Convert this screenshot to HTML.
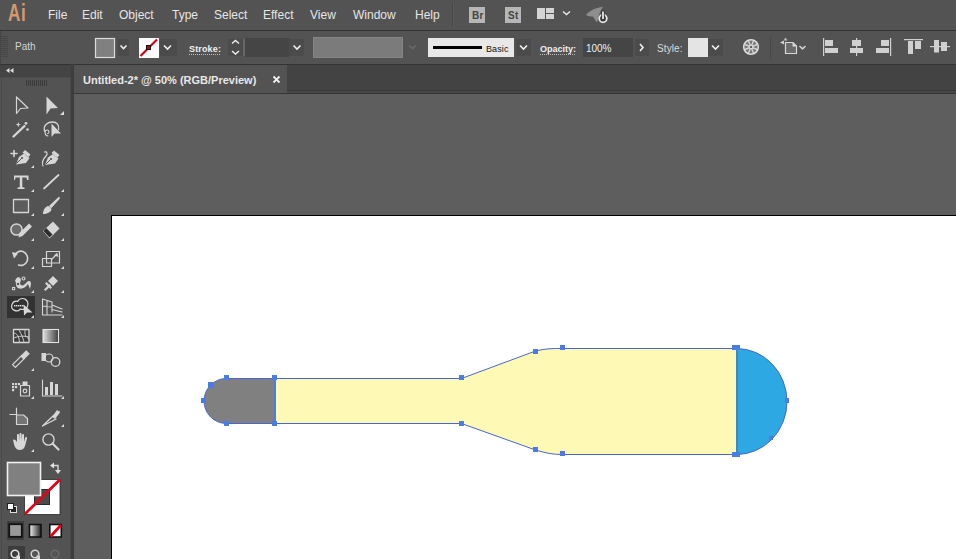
<!DOCTYPE html>
<html><head><meta charset="utf-8">
<style>
*{margin:0;padding:0;box-sizing:border-box}
html,body{width:956px;height:559px;overflow:hidden;background:#535353;font-family:"Liberation Sans",sans-serif}
.abs{position:absolute}
#menubar{left:0;top:0;width:956px;height:30px;background:#535353}
#menubar .m{position:absolute;top:8px;font-size:12px;color:#e6e6e6;line-height:14px;white-space:nowrap}
#line1{left:0;top:30px;width:956px;height:1px;background:#333}
#ctrl{left:0;top:31px;width:956px;height:33px;background:#535353}
#line2{left:0;top:64px;width:956px;height:1px;background:#333}
#tools{left:0;top:64px;width:72px;height:495px;background:#535353}
#toolhdr{left:0;top:64px;width:72px;height:14px;background:#434343}
#tabbar{left:72px;top:65px;width:884px;height:29px;background:#434343}
#tab{left:74px;top:65px;width:213px;height:28px;background:#535353}
#paste{left:74px;top:94px;width:882px;height:465px;background:#5e5e5e}
#artboard{left:111px;top:215px;width:845px;height:344px;background:#fff;border-left:1px solid #000;border-top:1px solid #000}
</style></head>
<body>
<div id="menubar" class="abs">
  <div class="abs" style="left:2px;top:2px;width:32px;height:26px;"></div>
  <div class="abs" style="left:8px;top:0px;font-size:23px;line-height:26px;color:#d39a70;transform:scaleX(0.74);transform-origin:0 0;letter-spacing:1px;font-weight:bold">Ai</div>
  <div class="m" style="left:48px">File</div>
  <div class="m" style="left:82px">Edit</div>
  <div class="m" style="left:119px">Object</div>
  <div class="m" style="left:172px">Type</div>
  <div class="m" style="left:214px">Select</div>
  <div class="m" style="left:263px">Effect</div>
  <div class="m" style="left:310px">View</div>
  <div class="m" style="left:353px">Window</div>
  <div class="m" style="left:415px">Help</div>
</div>
<!-- menubar icons -->
<svg class="abs" style="left:0;top:0" width="956" height="30" viewBox="0 0 956 30">
<rect x="452" y="3" width="1" height="23" fill="#474747"/><rect x="453" y="3" width="1" height="23" fill="#5c5c5c"/>
<rect x="469" y="7" width="16" height="16" fill="#b6b6b6"/>
<rect x="505" y="7" width="16" height="16" fill="#b6b6b6"/>
<g fill="#d4d4d4">
<rect x="537" y="8" width="8" height="11"/>
<rect x="546" y="8" width="8" height="5"/>
<rect x="546" y="14" width="8" height="5"/>
</g>
<path d="M563,11.5 L566.5,14.5 L570,11.5" fill="none" stroke="#e8e8e8" stroke-width="1.5"/>
<path d="M586,15 C589,11 595,8 603,6.5 C601.5,9 600.5,11 599.5,13.5 L597,22.5 C595.5,20.5 594,18.5 593,16.5 C591,16.5 588,16 586,15 Z" fill="#8e8e8e"/>
<circle cx="603" cy="18.5" r="3.8" fill="#3a3a3a" stroke="#e6e6e6" stroke-width="1.8"/>
<rect x="601.2" y="10.5" width="3.6" height="9" fill="#3a3a3a"/>
<rect x="602.1" y="11.5" width="1.8" height="7.5" fill="#e6e6e6"/>
</svg>
<div class="abs" style="left:472px;top:10px;font-size:10px;color:#444;letter-spacing:0.3px;font-weight:bold">Br</div>
<div class="abs" style="left:508px;top:10px;font-size:10px;color:#444;letter-spacing:0.3px;font-weight:bold">St</div>
<div id="line1" class="abs"></div>
<div id="ctrl" class="abs"></div>
<div id="ctrlitems">
<svg class="abs" style="left:0;top:31px" width="956" height="33" viewBox="0 31 956 33">
<!-- gripper -->
<g fill="#464646"><rect x="0" y="36" width="8" height="1"/><rect x="0" y="38" width="8" height="1"/><rect x="0" y="40" width="8" height="1"/><rect x="0" y="42" width="8" height="1"/><rect x="0" y="44" width="8" height="1"/><rect x="0" y="46" width="8" height="1"/><rect x="0" y="48" width="8" height="1"/><rect x="0" y="50" width="8" height="1"/><rect x="0" y="52" width="8" height="1"/><rect x="0" y="54" width="8" height="1"/><rect x="0" y="56" width="8" height="1"/><rect x="0" y="31" width="1" height="33"/></g>
<!-- fill swatch -->
<rect x="95.5" y="38.5" width="19" height="19" fill="#808080" stroke="#dcdcdc" stroke-width="1.2"/>
<rect x="118" y="39" width="11" height="17" fill="#4b4b4b"/>
<path d="M120.5,45.5 L123.5,48.5 L126.5,45.5" fill="none" stroke="#f0f0f0" stroke-width="1.6"/>
<!-- stroke swatch -->
<rect x="139" y="38" width="20" height="20" fill="#fafafa"/>
<path d="M140.5,56 L157,39.5" stroke="#d0001a" stroke-width="2.2"/>
<rect x="146.5" y="45.5" width="4" height="4" fill="#c00010" stroke="#111" stroke-width="1"/>
<rect x="160" y="39" width="17" height="17" fill="#4b4b4b"/>
<path d="M164,45.5 L167.5,49 L171,45.5" fill="none" stroke="#f0f0f0" stroke-width="1.6"/>
<!-- stroke label underline -->
<path d="M189,54.5 L221,54.5" stroke="#bdbdbd" stroke-width="1" stroke-dasharray="1 1"/>
<!-- spinner -->
<rect x="228" y="39" width="15" height="17" fill="#4b4b4b"/>
<path d="M232,43.5 L235.5,40.5 L239,43.5" fill="none" stroke="#f0f0f0" stroke-width="1.4"/>
<path d="M232,51 L235.5,54 L239,51" fill="none" stroke="#f0f0f0" stroke-width="1.4"/>
<rect x="243.5" y="39" width="1" height="17" fill="#7a7a7a"/>
<rect x="245" y="38" width="44" height="19" fill="#454545"/>
<rect x="289" y="39" width="15" height="17" fill="#4b4b4b"/>
<path d="M293.5,45.5 L297,49 L300.5,45.5" fill="none" stroke="#f0f0f0" stroke-width="1.6"/>
<!-- profile -->
<rect x="313" y="37" width="90" height="21" fill="#7b7b7b"/>
<rect x="313.5" y="37.5" width="89" height="20" fill="none" stroke="#858585" stroke-width="1"/>
<path d="M409,45.5 L412.5,48.5 L416,45.5" fill="none" stroke="#6c6c6c" stroke-width="1.4"/>
<!-- brush -->
<rect x="428" y="38" width="86" height="19" fill="#e8e8e8"/>
<rect x="433" y="46" width="49" height="3" fill="#000"/>
<rect x="516" y="39" width="15" height="17" fill="#4b4b4b"/>
<path d="M520,45.5 L523.5,49 L527,45.5" fill="none" stroke="#f0f0f0" stroke-width="1.6"/>
<!-- opacity -->
<path d="M540,54.5 L576,54.5" stroke="#bdbdbd" stroke-width="1" stroke-dasharray="1 1"/>
<rect x="583" y="38" width="50" height="19" fill="#454545"/>
<rect x="635" y="39" width="14" height="17" fill="#4b4b4b"/>
<path d="M640,44 L643,47.5 L640,51" fill="none" stroke="#f0f0f0" stroke-width="1.6"/>
<!-- style -->
<rect x="688" y="38" width="20" height="19" fill="#e4e4e4"/>
<rect x="708" y="39" width="15" height="17" fill="#4b4b4b"/>
<path d="M712,45.5 L715.5,49 L719,45.5" fill="none" stroke="#f0f0f0" stroke-width="1.6"/>
</svg>
<div class="abs" style="left:15px;top:41px;font-size:10px;color:#d4d4d4">Path</div>
<div class="abs" style="left:189px;top:44px;font-size:9px;color:#f0f0f0;font-weight:bold;letter-spacing:0.15px">Stroke:</div>
<div class="abs" style="left:486px;top:44px;font-size:9px;color:#111;letter-spacing:0.1px">Basic</div>
<div class="abs" style="left:540px;top:44px;font-size:9px;color:#f0f0f0;font-weight:bold">Opacity:</div>
<div class="abs" style="left:586px;top:43px;font-size:10px;color:#f0f0f0;letter-spacing:-0.1px">100%</div>
<div class="abs" style="left:657px;top:43px;font-size:10px;color:#dcdcdc;letter-spacing:0.1px">Style:</div>
</div>
<!-- control right icons -->
<svg class="abs" style="left:730px;top:31px" width="226" height="33" viewBox="730 31 226 33">
<circle cx="751" cy="47" r="7.3" fill="#777" stroke="#dcdcdc" stroke-width="1.6"/>
<path d="M751,47 L757.01,49.49 M751,47 L753.49,53.01 M751,47 L748.51,53.01 M751,47 L744.99,49.49 M751,47 L744.99,44.51 M751,47 L748.51,40.99 M751,47 L753.49,40.99 M751,47 L757.01,44.51" stroke="#d4d4d4" stroke-width="1.4"/>
<circle cx="751" cy="47" r="2.2" fill="#d4d4d4"/><circle cx="751" cy="47" r="1.1" fill="#444"/>
<rect x="770" y="37" width="1" height="22" fill="#484848"/>
<path d="M785.5,42.5 L793,42.5 L796.5,46 L796.5,53.5 L785.5,53.5 Z" fill="#6a6a6a" stroke="#d8d8d8" stroke-width="1.2"/>
<path d="M792.5,42.5 L796.5,46.5 L792.5,46.5 Z" fill="#d8d8d8"/>
<path d="M785.5,37.5 L783.5,40.5 L787.5,40.5 Z" fill="#bdbdbd"/>
<path d="M780,42.5 L784,40.5 L784,44.5 Z" fill="#cfcfcf"/>
<path d="M799.5,46 L802.5,48.8 L805.5,46" fill="none" stroke="#d0d0d0" stroke-width="1.6"/>
<g fill="#d0d0d0">
<rect x="823" y="38" width="1.2" height="18"/>
<rect x="825" y="40" width="8" height="6"/><rect x="825" y="48" width="13" height="5"/>
<rect x="856" y="38" width="1.2" height="18"/>
<rect x="852" y="40" width="9" height="6"/><rect x="850" y="48" width="13" height="5"/>
<rect x="890" y="38" width="1.2" height="18"/>
<rect x="881" y="40" width="8" height="6"/><rect x="876" y="48" width="13" height="5"/>
<rect x="904" y="39" width="19" height="1.2"/>
<rect x="908" y="41" width="5" height="13"/><rect x="915" y="41" width="6" height="8"/>
<rect x="930" y="46" width="20" height="1.2"/>
<rect x="934" y="40" width="5" height="12.5"/><rect x="941" y="42" width="6" height="9"/>
</g>
</svg>
<div id="line2" class="abs"></div>
<div id="tools" class="abs"></div>
<svg class="abs" style="left:0;top:64px" width="72" height="495" viewBox="0 64 72 495">
<rect x="0" y="64" width="72" height="14" fill="#444"/><rect x="0" y="64" width="72" height="1" fill="#333"/>
<rect x="0" y="77" width="72" height="1" fill="#4c4c4c"/>
<path d="M9.5,68 L6,70.5 L9.5,73 Z M13.5,68 L10,70.5 L13.5,73 Z" fill="#e0e0e0"/>
<rect x="1" y="78" width="1" height="481" fill="#4a4a4a"/>
<rect x="70" y="78" width="1" height="481" fill="#4a4a4a"/>
<rect x="71" y="64" width="1" height="495" fill="#3a3a3a"/>
<g fill="#3a3a3a">
<rect x="26" y="80" width="1" height="6"/><rect x="28" y="80" width="1" height="6"/><rect x="30" y="80" width="1" height="6"/><rect x="32" y="80" width="1" height="6"/><rect x="34" y="80" width="1" height="6"/><rect x="36" y="80" width="1" height="6"/><rect x="38" y="80" width="1" height="6"/><rect x="40" y="80" width="1" height="6"/><rect x="42" y="80" width="1" height="6"/><rect x="44" y="80" width="1" height="6"/><rect x="46" y="80" width="1" height="6"/>
</g>
<!-- selected tool bg -->
<rect x="7" y="296" width="28" height="22" fill="#323232"/>
<g fill="none" stroke="#d6d6d6" stroke-width="1.2" stroke-linejoin="round" stroke-linecap="round">
<!-- selection -->
<path d="M16.5,97 L16.5,113.5 L20.5,108.5 L28,108 Z"/>
<!-- magic wand -->
<path d="M13.5,136.5 L24.5,126" stroke-width="2.4"/>
<!-- lasso loop -->
<path d="M44.5,131 C43,125 48,122 52.5,122 C57,122 59.5,125 58.5,129.5" stroke-width="1.3"/>
<path d="M48,136 C44.5,135.5 44,130 47,130 C49.5,130 49.5,133.5 47.5,133.5" stroke-width="1.1"/>
<!-- add pen plus -->
<path d="M11,153.5 L17,153.5 M14,150.5 L14,156.5" stroke-width="1.6"/>
<!-- curvature pen curve -->
<path d="M43,166 C41,161 44,158 46,156 C48,154 47,151 44.5,152"/>
<!-- line -->
<path d="M44,188.5 L58.5,175" stroke-width="1.8"/>
<!-- rect -->
<rect x="13.5" y="199.5" width="15" height="13" fill="#5c5c5c" stroke-width="1.3"/>
<!-- shaper circle -->
<circle cx="16.5" cy="229.5" r="5.6" fill="#6c6c6c" stroke-width="1.5"/>
<!-- rotate -->
<path d="M14.5,256 C16,251.5 20,250.5 23,251.5 C27,253 28.5,258 27,261.5 C25.5,265 21.5,266 18.5,265" stroke-width="1.6"/>
<!-- scale -->
<rect x="46.5" y="251.5" width="13" height="11.5" stroke-width="1.2"/>
<rect x="42.5" y="258.5" width="9" height="8" stroke-width="1.2"/>
<path d="M52,259 L57,254" stroke-width="1.3"/>
<!-- perspective grid -->
<path d="M42.5,299 L42.5,315 L62,315 M42.5,299 L52,302 L52,312 M47,300.5 L47,314 M42.5,306 L52,307 M52,305 L62,309 M52,309.5 L62,312" stroke-width="1.1"/>
<!-- mesh -->
<rect x="13.5" y="329.5" width="15.5" height="13" fill="#3c3c3c" stroke-width="1.3"/>
<path d="M13.5,333 C17,333 19,336 19.5,342.5 M13.5,338 C17,337 21,335 29,337 M19,329.5 C20,333 23,336 24,342.5 M25,329.5 C25,333 24,336 29,339" stroke="#cfcfcf" stroke-width="1"/>
<!-- eyedropper -->
<path d="M15.4,367.4 L12.6,364.6 L21.6,355.6 L24.4,358.4 Z" stroke-width="1.3"/>
<!-- blend circles -->
<circle cx="49" cy="358" r="4" stroke-width="1.2"/>
<circle cx="55.5" cy="362" r="4.3" stroke-width="1.3"/>
<!-- symbol sprayer canister -->
<rect x="20.5" y="385.5" width="9" height="10.5" stroke-width="1.2"/>
<circle cx="25" cy="391" r="1.8" stroke-width="1.2"/>
<!-- graph -->
<path d="M42.5,380 L42.5,396 L62,396" stroke-width="1.1"/>
<!-- artboard -->
<path d="M16.5,415 L16.5,424.5 L27.5,424.5 L27.5,418.5 L23.5,415 Z" fill="#747474" stroke-width="1.2"/>
<path d="M16.5,408 L16.5,415 M10,414.5 L16.5,414.5" stroke-width="1.2"/>
<!-- slice knife -->
<path d="M42.5,426 L53,416 L59,411.5 M42.5,426 L56,419" stroke-width="1.3"/>
<!-- zoom -->
<circle cx="48.5" cy="439.5" r="5.6" stroke-width="1.4"/>
<path d="M52.5,443.5 L58.5,449.5" stroke-width="2.2"/>
</g>
<g fill="#d6d6d6">
<!-- direct selection -->
<path d="M46.5,96.5 L46.5,114.5 L50.5,108.5 L58,108 Z"/>
<!-- wand sparkles -->
<path d="M18.3,122 L19,124 L21,124.6 L19,125.3 L18.3,127.3 L17.6,125.3 L15.6,124.6 L17.6,124 Z"/>
<circle cx="26" cy="123.3" r="1.4"/><circle cx="27.5" cy="129.5" r="1.3"/>
<!-- lasso arrow -->
<path d="M51.5,123.5 L51.5,137 L54.5,133.5 L61,133.5 Z"/>
<!-- pen nib add -->
<path d="M16,164.5 L19,157 L24,153.5 L29.5,158 L26,163 Z"/>
<path d="M22.5,152.5 L25,150 L30.5,154.5 L28.5,157 Z"/>
<!-- curvature nib -->
<path d="M45,165 L48,157.5 L53,154 L58.5,158.5 L55,163.5 Z"/>
<path d="M51.5,153 L54,150.5 L59.5,155 L57.5,157.5 Z"/>
<!-- T -->
<path d="M14,175.5 L28.5,175.5 L28.5,180 L27,180 L26.5,177.5 L22.3,177.5 L22.3,187.2 L24.5,187.5 L24.5,189 L17.5,189 L17.5,187.5 L19.8,187.2 L19.8,177.5 L15.5,177.5 L15,180 L14,180 Z"/>
<!-- paintbrush -->
<path d="M49,206 L58,197.5 C59.5,196.5 60.5,197.5 59.5,199 L51,208.5 Z"/>
<path d="M43,214 C43,210 45,206.5 48.5,206 L51.5,209 C51,212.5 47,214 43,214 Z"/>
<!-- shaper pencil -->
<path d="M18.5,237.5 L19.5,233 L29,223.5 L32,226.5 L22.5,236 Z"/>
<!-- eraser -->
<path d="M43,231 L53,221.5 L59.5,228.5 L49.5,238.5 Z"/>
<path d="M46.2,228 L43.5,231 L49.5,237.5 L52.5,234.5 Z" fill="#2e2e2e"/>
<!-- rotate arrow head -->
<path d="M12,252 L18,253.5 L14,258.5 Z"/>
<path d="M57,253 L58.5,257 L54,255.5 Z"/>
<!-- warp -->
<path d="M15,281 C16,277 19,276 20.5,278.5 C22,281 18.5,283 21,285 C23,286.5 25,284 27,282 C29,280 31,281 31,284 L30,289 L28,284 C26,287 22,290 18,288 C15,286.5 17,283 15,281 Z"/>
<circle cx="23.5" cy="278.5" r="2"/>
<rect x="12" y="287" width="3.2" height="3.2"/>
<!-- puppet pin -->
<path d="M44,289.5 L49.5,284 L51,285.5 L45.5,291 Z"/>
<path d="M48,281 L53,276 L58,281 L53,286 Z"/>
<path d="M46.5,282 L52,287.5 L50.5,289 L45,283.5 Z"/>
<!-- shape builder arrow -->
<path d="M23.5,304.5 L24,315.5 L27.2,312.5 L32.5,312.5 Z"/>
<!-- blend rect -->
<rect x="41.5" y="353" width="4.5" height="8"/>
<!-- eyedropper head -->
<path d="M23.8,359.8 L20.2,356.2 L26.2,350.2 L29.8,353.8 Z"/>
<!-- symbol sprayer dots -->
<rect x="12" y="383" width="2.2" height="2.2"/><rect x="15" y="383" width="2.2" height="2.2"/><rect x="18" y="383" width="2.2" height="2.2"/>
<rect x="12" y="386" width="2.2" height="2.2"/><rect x="15" y="386" width="2.2" height="2.2"/><rect x="12" y="389" width="2.2" height="2.2"/>
<rect x="22.5" y="381.5" width="5" height="3.5"/>
<!-- graph bars -->
<rect x="45" y="387" width="3" height="8"/><rect x="50" y="382" width="3" height="13"/><rect x="55" y="384" width="3" height="11"/>
<!-- slice head -->
<path d="M52,417 L57,410 L60,412.5 L55,419 Z"/>
<!-- hand -->
<path d="M13,440 C14,439 16,440 17,442 L17,435 C17,433.5 19,433.5 19,435 L19,441 L19.5,434 C19.5,432.5 21.5,432.5 21.5,434 L21.5,441 L22,435 C22,433.5 24,433.5 24,435 L24,442 L25,438 C25.5,436.5 27.5,437 27,438.5 L25,446 C24,449 22,450 19.5,450 C17,450 15.5,448 14.5,446 Z"/>
</g>
<circle cx="18" cy="284" r="1.7" fill="#555" stroke="#d6d6d6" stroke-width="0.9"/><circle cx="23.5" cy="278.5" r="0.9" fill="#555"/><rect x="13" y="288" width="1.2" height="1.2" fill="#555"/>
<path d="M16.5,163.5 L21.5,158.5 M45.5,164.5 L50.5,159.5" stroke="#555" stroke-width="1"/><circle cx="22" cy="158" r="1.1" fill="#555"/><circle cx="51" cy="159" r="1.1" fill="#555"/>
<!-- shape builder cloud -->
<path d="M20.24,309.01 A4.8,4.8 0 1 1 17.68,301.35 A5.5,5.5 0 1 1 20.24,309.01 Z" fill="none" stroke="#dadada" stroke-width="1.2"/>
<g fill="#e8e8e8"><rect x="14" y="305" width="1.4" height="1.4"/><rect x="16" y="305" width="1.4" height="1.4"/><rect x="18" y="305" width="1.4" height="1.4"/><rect x="20" y="305" width="1.4" height="1.4"/><rect x="22" y="305" width="1.4" height="1.4"/></g>
<!-- gradient -->
<defs><linearGradient id="gr" x1="0" x2="1" y1="0" y2="0"><stop offset="0" stop-color="#e0e0e0"/><stop offset="1" stop-color="#3e3e3e"/></linearGradient></defs>
<rect x="43" y="329.5" width="15.5" height="13" fill="url(#gr)" stroke="#e0e0e0" stroke-width="1.1"/>
<!-- corner triangles -->
<g fill="#dcdcdc">
<path d="M64,111 L64,115 L60,115 Z"/>
<path d="M34,165 L34,168 L31,168 Z"/>
<path d="M64,189 L64,192 L61,192 Z"/>
<path d="M34,189 L34,192 L31,192 Z"/>
<path d="M34,213 L34,216 L31,216 Z"/>
<path d="M64,213 L64,216 L61,216 Z"/>
<path d="M34,238 L34,241 L31,241 Z"/>
<path d="M64,238 L64,241 L61,241 Z"/>
<path d="M34,266 L34,269 L31,269 Z"/>
<path d="M64,266 L64,269 L61,269 Z"/>
<path d="M64,290 L64,293 L61,293 Z"/>
<path d="M34,290 L34,293 L31,293 Z"/>
<path d="M34,315 L34,318 L31,318 Z"/>
<path d="M64,315 L64,318 L61,318 Z"/>
<path d="M34,368 L34,371 L31,371 Z"/>
<path d="M34,396 L34,399 L31,399 Z"/>
<path d="M64,396 L64,399 L61,399 Z"/>
<path d="M64,424 L64,427 L61,427 Z"/>
<path d="M34,449 L34,452 L31,452 Z"/>
</g>
<!-- fill / stroke -->
<rect x="24.5" y="479.5" width="35.5" height="35" fill="#fff" stroke="#2a2a2a" stroke-width="0.8"/>
<rect x="34.5" y="489.5" width="15" height="15" fill="#4a4a4a" stroke="#2a2a2a" stroke-width="1"/>
<path d="M25,514 L60,479.5" stroke="#e3001b" stroke-width="2.8"/>
<rect x="7.5" y="462.5" width="33" height="33" fill="#808080" stroke="#f0f0f0" stroke-width="1.6"/>
<!-- swap -->
<path d="M52,465.5 L58,465.5 L58,470.5" fill="none" stroke="#d8d8d8" stroke-width="1.4"/>
<path d="M50,465.5 L54,462.5 L54,468.5 Z M58,474 L55,470 L61,470 Z" fill="#e0e0e0"/>
<!-- default -->
<rect x="10.5" y="506.5" width="6" height="6" fill="#222" stroke="#ddd" stroke-width="1"/>
<rect x="7.5" y="503.5" width="6" height="6" fill="#fff" stroke="#222" stroke-width="1"/>
<!-- modes -->
<rect x="7" y="521" width="17" height="19" fill="#3e3e3e"/>
<rect x="9.2" y="524.2" width="12.6" height="12.6" fill="#999" stroke="#111" stroke-width="1.8"/>
<defs><linearGradient id="gr2" x1="0" x2="1"><stop offset="0" stop-color="#f4f4f4"/><stop offset="1" stop-color="#222"/></linearGradient></defs>
<rect x="29.5" y="524.5" width="11.5" height="12.5" fill="url(#gr2)" stroke="#111" stroke-width="1.6"/>
<rect x="49.8" y="524.5" width="11.5" height="12.5" fill="#fff" stroke="#111" stroke-width="1.6"/>
<path d="M50.5,536.5 L61,525" stroke="#e8001b" stroke-width="2.8"/>
<!-- bottom row -->
<rect x="8" y="546" width="17" height="13" fill="#3c3c3c"/>
<circle cx="15" cy="554" r="3.8" fill="none" stroke="#e0e0e0" stroke-width="1.6"/>
<rect x="16.5" y="555.5" width="3.5" height="3.5" fill="#e0e0e0"/>
<circle cx="35" cy="554" r="3.8" fill="none" stroke="#d0d0d0" stroke-width="1.6"/>
<rect x="36.5" y="555.5" width="3.5" height="3.5" fill="#d0d0d0"/>
<circle cx="55" cy="554" r="3.8" fill="none" stroke="#6a6a6a" stroke-width="1.4"/>
</svg>
<div id="tabbar" class="abs"></div>
<div id="tab" class="abs"></div>
<div class="abs" style="left:83px;top:74px;font-size:11px;font-weight:bold;color:#e8e8e8;white-space:nowrap">Untitled-2* @ 50% (RGB/Preview)</div>
<svg class="abs" style="left:272px;top:75px" width="10" height="10" viewBox="0 0 10 10"><path d="M1.5,1.5 L7.5,7.5 M7.5,1.5 L1.5,7.5" stroke="#f0f0f0" stroke-width="1.8"/></svg>
<div class="abs" style="left:287px;top:90px;width:669px;height:3px;background:#474747;border-top:1px solid #393939"></div>
<div class="abs" style="left:72px;top:93px;width:884px;height:1px;background:#363636"></div>
<div id="paste" class="abs"></div>
<div id="artboard" class="abs"></div>
<div class="abs" style="left:71px;top:64px;width:3px;height:495px;background:#3d3d3d"></div>
<svg class="abs" style="left:0;top:0" width="956" height="559" viewBox="0 0 956 559">
<g stroke="#4a66cc" stroke-width="1" shape-rendering="geometricPrecision">
<path d="M226.5,378.5 L274.5,378.5 L274.5,423.5 L226.5,423.5 A22.5,22.5 0 0 1 226.5,378.5 Z" fill="#808080"/>
<path d="M274.5,378.5 L461.5,378.5 L535.5,351 C546,348.5 552,348.5 562.5,348.5 L736.5,348.5 L736.5,454.5 L562.5,454.5 C552,454.5 546,453 535.5,450 L461.5,423.5 L274.5,423.5 Z" fill="#fff9b6"/>
<path d="M736.5,348.5 A50.5,53 0 0 1 736.5,454.5 Z" fill="#2ea8e2"/>
</g>
<g fill="#4c7be6">
<rect x="224" y="375" width="5" height="5"/>
<rect x="208" y="382" width="6" height="6"/>
<rect x="201" y="398" width="5" height="5"/>
<rect x="224" y="421" width="5" height="5"/>
<rect x="272" y="375" width="5" height="5"/>
<rect x="274" y="378" width="2" height="46"/>
<rect x="272" y="421" width="5" height="5"/>
<rect x="459" y="375" width="5" height="5"/>
<rect x="459" y="421" width="5" height="5"/>
<rect x="533" y="349" width="5" height="5"/>
<rect x="533" y="447" width="5" height="5"/>
<rect x="560" y="345" width="5" height="5"/>
<rect x="560" y="451" width="5" height="5"/>
<rect x="732" y="345" width="8" height="5"/>
<rect x="732" y="452" width="8" height="5"/>
<rect x="736" y="349" width="2" height="105" fill="#3f86c8"/>
<rect x="785" y="398" width="4" height="5"/>
<rect x="769" y="436" width="4" height="4"/>
</g>
</svg>
</body></html>
